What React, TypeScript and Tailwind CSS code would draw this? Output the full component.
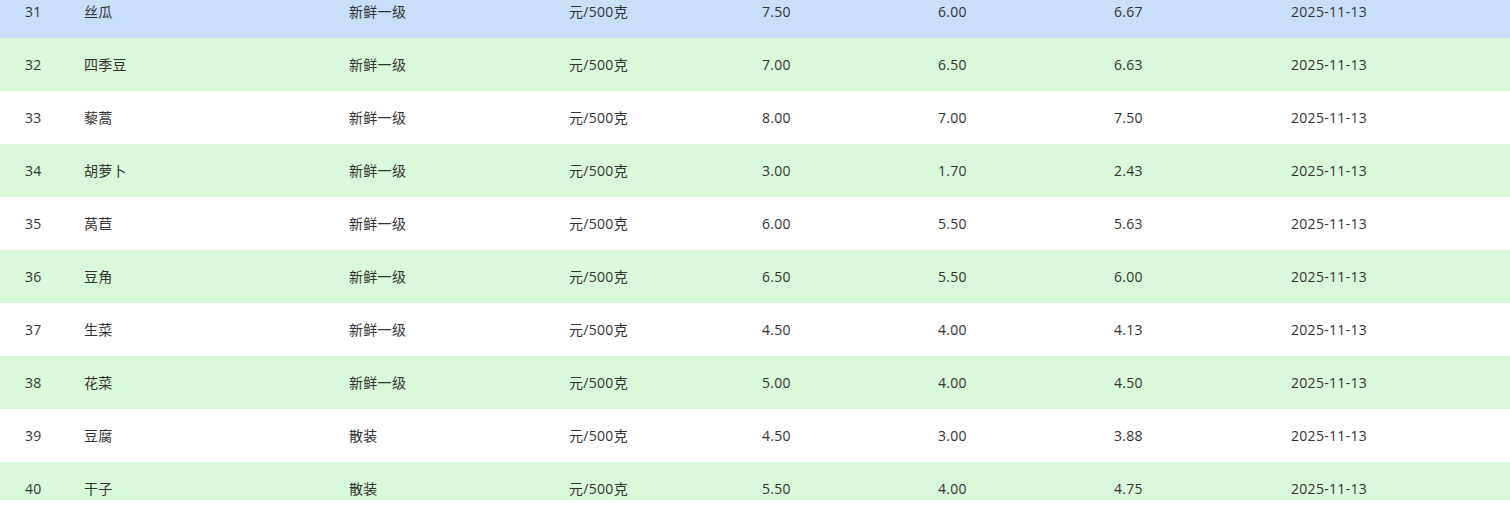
const ROWS = [
  { no: 31, name: "丝瓜", grade: "新鲜一级", max: "7.50", min: "6.00", avg: "6.67" },
  { no: 32, name: "四季豆", grade: "新鲜一级", max: "7.00", min: "6.50", avg: "6.63" },
  { no: 33, name: "藜蒿", grade: "新鲜一级", max: "8.00", min: "7.00", avg: "7.50" },
  { no: 34, name: "胡萝卜", grade: "新鲜一级", max: "3.00", min: "1.70", avg: "2.43" },
  { no: 35, name: "莴苣", grade: "新鲜一级", max: "6.00", min: "5.50", avg: "5.63" },
  { no: 36, name: "豆角", grade: "新鲜一级", max: "6.50", min: "5.50", avg: "6.00" },
  { no: 37, name: "生菜", grade: "新鲜一级", max: "4.50", min: "4.00", avg: "4.13" },
  { no: 38, name: "花菜", grade: "新鲜一级", max: "5.00", min: "4.00", avg: "4.50" },
  { no: 39, name: "豆腐", grade: "散装", max: "4.50", min: "3.00", avg: "3.88" },
  { no: 40, name: "干子", grade: "散装", max: "5.50", min: "4.00", avg: "4.75" },
];

export default function App() {
  return (
    <div className="h-[506px] w-[1510px] bg-white">
      {/* scrolled price list, first row partly hidden */}
      <div className="h-[500px] overflow-hidden text-[14px] tracking-[0.3px] text-[#333] [font-family:'Open_Sans','Noto_Sans_CJK_SC',sans-serif]">
        <div className="-mt-[15px]">
          {ROWS.map((r, i) => (
            <div
              key={r.no}
              className={`grid h-[53px] grid-cols-[59px_265px_220px_193px_176px_176px_177px_1fr] items-center pl-[25px] ${
                i === 0 ? "bg-[#c9dff8]" : i % 2 === 1 ? "bg-[#daf9da]" : "bg-white"
              }`}
            >
              <span>{r.no}</span>
              <span>{r.name}</span>
              <span>{r.grade}</span>
              <span>元/500克</span>
              <span>{r.max}</span>
              <span>{r.min}</span>
              <span>{r.avg}</span>
              <span>2025-11-13</span>
            </div>
          ))}
        </div>
      </div>
    </div>
  );
}
